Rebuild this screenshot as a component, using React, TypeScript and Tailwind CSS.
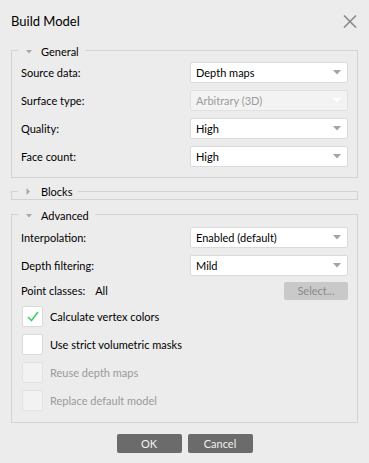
import React from "react";

const Arrow = ({ color = "#a0a0a0" }: { color?: string }) => (
  <svg width="8" height="5" viewBox="0 0 8 5"><path d="M0 0 H8 L4 4.5 Z" fill={color} /></svg>
);

const Combo = ({ value, disabled }: { value: string; disabled?: boolean }) => (
  <div
    className={`w-[158px] h-[21px] rounded-[2px] border flex items-center justify-between pl-[5px] pr-[6px] ${
      disabled ? "bg-[#f3f3f3] border-[#e0e0e0] text-[#9b9b9b]" : "bg-white border-[#dadada] text-[#000]"
    }`}
  >
    <span>{value}</span>
    <Arrow color={disabled ? "#ffffff" : "#a3a3a3"} />
  </div>
);

const Row = ({ label, value, disabled }: { label: string; value: string; disabled?: boolean }) => (
  <div className="flex items-center justify-between h-[21px]">
    <span className="text-[#000]">{label}</span>
    <Combo value={value} disabled={disabled} />
  </div>
);

const Check = ({ label, checked, disabled }: { label: string; checked?: boolean; disabled?: boolean }) => (
  <div className="flex items-center h-[21px] gap-[7px] pl-[1px]">
    <div
      className={`w-[21px] h-[21px] rounded-[2px] border flex items-center justify-center ${
        disabled ? "bg-[#f2f2f2] border-[#e2e2e2]" : "bg-white border-[#dadada]"
      }`}
    >
      {checked && (
        <svg width="12" height="11" viewBox="0 0 12 11">
          <path d="M1 6 L4.5 9.5 L11 1" stroke="#3fcf6a" strokeWidth="1.6" fill="none" />
        </svg>
      )}
    </div>
    <span className={disabled ? "text-[#9a9a9a]" : "text-[#000]"}>{label}</span>
  </div>
);

const Legend = ({ title, open }: { title: string; open: boolean }) => (
  <legend className="ml-[-3px] pl-[8px] pr-[6px] h-[16px]">
    <span className="inline-flex items-center h-[16px] gap-[9px] text-[#000]">
      {open ? (
        <svg width="6" height="4" viewBox="0 0 6 4"><path d="M0 0 H6 L3 3.5 Z" fill="#a8a8a8" /></svg>
      ) : (
        <svg width="6" height="7" viewBox="0 0 6 7"><path d="M0.5 0 V7 L4 3.5 Z" fill="#a8a8a8" /></svg>
      )}
      <span>{title}</span>
    </span>
  </legend>
);

export default function App() {
  return (
    <div
      className="w-[369px] h-[463px] bg-[#ececec] px-[11px] text-[11px] leading-[16px]"
      style={{ fontFamily: "Lato, 'Noto Sans', sans-serif" }}
    >
      <div className="h-[42px] flex items-center justify-between">
        <span className="text-[13px] text-[#000]">Build Model</span>
        <svg width="14" height="13" viewBox="0 0 14 13" className="mr-[1px]">
          <path d="M1 0.5 L13 12.5 M13 0.5 L1 12.5" stroke="#8a8a8a" strokeWidth="1.6" />
        </svg>
      </div>

      <fieldset className="border border-[#d3d3d3] px-[9px] pt-[4px] pb-[10px] min-w-0">
        <Legend title="General" open />
        <div className="flex flex-col gap-[7px]">
          <Row label="Source data:" value="Depth maps" />
          <Row label="Surface type:" value="Arbitrary (3D)" disabled />
          <Row label="Quality:" value="High" />
          <Row label="Face count:" value="High" />
        </div>
      </fieldset>

      <fieldset className="mt-[5px] border border-[#d3d3d3] px-[9px] min-w-0">
        <Legend title="Blocks" open={false} />
      </fieldset>

      <fieldset className="mt-[6px] border border-[#d3d3d3] px-[9px] pt-[5px] pb-[11px] min-w-0">
        <Legend title="Advanced" open />
        <div className="flex flex-col gap-[7px]">
          <Row label="Interpolation:" value="Enabled (default)" />
          <Row label="Depth filtering:" value="Mild" />
        </div>
        <div className="mt-[6px] h-[18px] flex items-center justify-between">
          <div className="flex items-center gap-[10px] text-[#000]">
            <span>Point classes:</span>
            <span>All</span>
          </div>
          <div className="w-[64px] h-[18px] rounded-[2px] bg-[#c9c9c9] text-[#8a8a8a] flex items-center justify-center">
            Select...
          </div>
        </div>
        <div className="mt-[6px] flex flex-col gap-[7px]">
          <Check label="Calculate vertex colors" checked />
          <Check label="Use strict volumetric masks" />
          <Check label="Reuse depth maps" disabled />
          <Check label="Replace default model" disabled />
        </div>
      </fieldset>

      <div className="mt-[11px] flex justify-center gap-[6px]">
        <div className="w-[65px] h-[19px] rounded-[2px] bg-[#6b6b6b] text-[#f0f0f0] flex items-center justify-center">OK</div>
        <div className="w-[65px] h-[19px] rounded-[2px] bg-[#6b6b6b] text-[#f0f0f0] flex items-center justify-center">Cancel</div>
      </div>
    </div>
  );
}
